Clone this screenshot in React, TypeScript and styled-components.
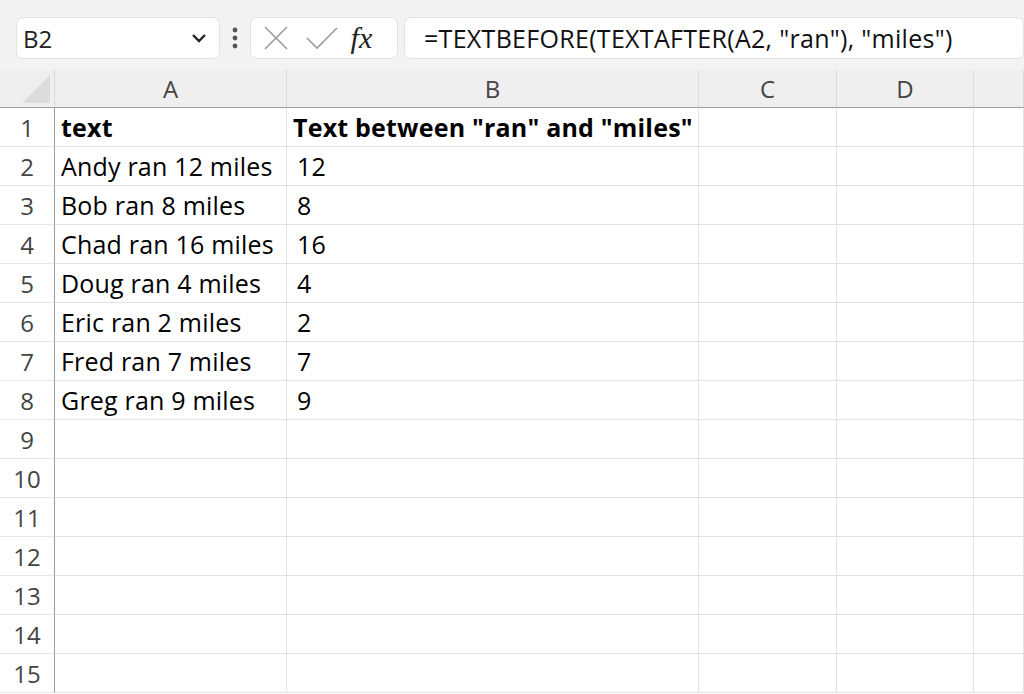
import React from "react";
import styled, { createGlobalStyle } from "styled-components";

const Global = createGlobalStyle`
  html, body { margin: 0; padding: 0; background: #fff; overflow: hidden; }
  body { font-family: "Open Sans", "Noto Sans", sans-serif; }
`;

const Page = styled.div`width: 1024px; height: 694px; overflow: hidden; background: #fff;`;
const Bar = styled.div`
  height: 70px; background: #f3f3f3; display: flex; align-items: center;
  padding: 0 0 0 16px; box-sizing: border-box; padding-top: 6px;
`;
const Box = styled.div<{ w: number }>`
  width: ${p => p.w}px; height: 42px; box-sizing: border-box; background: #fff;
  border: 1px solid #e1e1e1; border-radius: 7px; display: flex; align-items: center;
  flex: 0 0 auto;
`;
const NameText = styled.span`flex: 1; padding-left: 6px; font-size: 24px; color: #222;`;
const Dots = styled.div`width: 46px; display: flex; justify-content: center; color: #555;`;
const Formula = styled.span`padding-left: 19px; font-size: 25px; letter-spacing: 0.3px; color: #111; white-space: nowrap;`;
const Fx = styled.span`font-family: "Liberation Serif", serif; font-style: italic; font-size: 30px; color: #222; margin-left: 12px;`;

const Grid = styled.div`
  display: grid; grid-template-columns: 55px 232px 412px 138px 137px 1fr;
  grid-auto-rows: 39px; grid-template-rows: 38px;
`;
const Corner = styled.div`
  background: #efefef; border-bottom: 1px solid #9c9c9c; border-right: 1px solid #dadada; position: relative;
  &::after { content: ""; position: absolute; right: 4px; bottom: 4px; width: 0; height: 0;
    border-left: 28px solid transparent; border-bottom: 28px solid #dcdcdc; }
`;
const ColHead = styled.div`
  background: #efefef; border-bottom: 1px solid #9c9c9c; border-right: 1px solid #dadada;
  display: flex; align-items: center; justify-content: center; font-size: 24px; color: #444;
`;
const RowHead = styled.div`
  background: #fff; border-right: 1px solid #9c9c9c; border-bottom: 1px solid #e6e6e6;
  display: flex; align-items: center; justify-content: center; font-size: 24px; color: #444;
`;
const Cell = styled.div<{ bold?: boolean; pad?: number }>`
  border-right: 1px solid #e2e2e2; border-bottom: 1px solid #e2e2e2;
  display: flex; align-items: center; padding-left: ${p => p.pad ?? 6}px;
  font-size: 25px; letter-spacing: 0.2px; color: #000; font-weight: ${p => (p.bold ? 700 : 400)};
  white-space: nowrap; overflow: visible;
`;

const rows: [string, string][] = [
  ["Andy ran 12 miles", "12"], ["Bob ran 8 miles", "8"], ["Chad ran 16 miles", "16"],
  ["Doug ran 4 miles", "4"], ["Eric ran 2 miles", "2"], ["Fred ran 7 miles", "7"], ["Greg ran 9 miles", "9"],
];

export default function App() {
  const all: [string, string][] = [...rows];
  while (all.length < 14) all.push(["", ""]);
  return (
    <Page>
      <Global />
      <Bar>
        <Box w={204}>
          <NameText>B2</NameText>
          <svg width="16" height="10" viewBox="0 0 16 10" style={{ marginRight: 12 }}>
            <path d="M2 2 L8 8 L14 2" fill="none" stroke="#222" strokeWidth="2.4" />
          </svg>
        </Box>
        <Dots>
          <svg width="6" height="22" viewBox="0 0 6 22"><circle cx="3" cy="3" r="2.4" fill="#555"/><circle cx="3" cy="11" r="2.4" fill="#555"/><circle cx="3" cy="19" r="2.4" fill="#555"/></svg>
        </Dots>
        <Box w={148}>
          <svg width="26" height="26" viewBox="0 0 26 26" style={{ marginLeft: 12 }}>
            <path d="M2 2 L24 24 M24 2 L2 24" stroke="#9a9a9a" strokeWidth="1.6" />
          </svg>
          <svg width="34" height="26" viewBox="0 0 34 26" style={{ marginLeft: 16 }}>
            <path d="M2 13 L12 23 L32 3" fill="none" stroke="#9a9a9a" strokeWidth="1.6" />
          </svg>
          <Fx>fx</Fx>
        </Box>
        <div style={{ width: 10 }} />
        <Box w={620}>
          <Formula>=TEXTBEFORE(TEXTAFTER(A2, "ran"), "miles")</Formula>
        </Box>
      </Bar>
      <Grid>
        <Corner />
        {["A", "B", "C", "D", ""].map((c, i) => <ColHead key={i}>{c}</ColHead>)}
        <RowHead>1</RowHead>
        <Cell bold>text</Cell>
        <Cell bold>Text between "ran" and "miles"</Cell>
        <Cell /><Cell /><Cell />
        {all.map(([a, b], i) => (
          <React.Fragment key={i}>
            <RowHead>{i + 2}</RowHead>
            <Cell>{a}</Cell>
            <Cell pad={10}>{b}</Cell>
            <Cell /><Cell /><Cell />
          </React.Fragment>
        ))}
      </Grid>
    </Page>
  );
}
